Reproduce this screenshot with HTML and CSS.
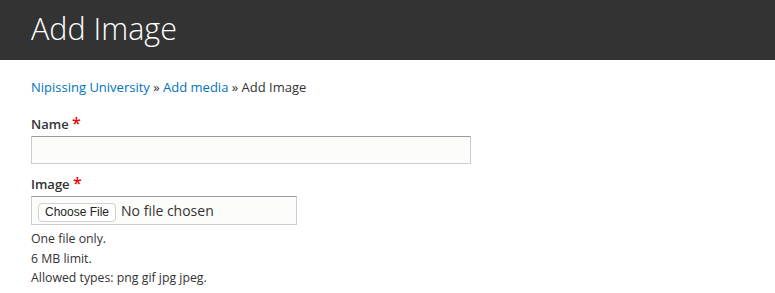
FILE: index.html
```html
<!DOCTYPE html>
<html lang="en">
<head>
  <meta charset="UTF-8">
  <title>Add Image</title>
  <link rel="stylesheet" href="styles.css">
</head>
<body>
  <!-- Page header -->
  <div class="page-header">
    <h1>Add Image</h1>
  </div>

  <div class="content">
    <div class="breadcrumb">
      <a href="#">Nipissing University</a> » <a href="#">Add media</a> » Add Image
    </div>

    <form class="media-form">
      <div class="form-item">
        <label for="edit-name">Name <span class="required">*</span></label>
        <input type="text" id="edit-name" class="form-text">
      </div>

      <div class="form-item">
        <label for="edit-image">Image <span class="required">*</span></label>
        <div class="file-wrap">
          <input type="file" id="edit-image" class="form-file">
        </div>
        <div class="description">
          One file only.<br>
          6 MB limit.<br>
          Allowed types: png gif jpg jpeg.
        </div>
      </div>
    </form>
  </div>
</body>
</html>
```

FILE: styles.css
```css
body {
  margin: 0;
  padding: 0;
  font-family: "Open Sans", "Liberation Sans", sans-serif;
  color: #333;
  background: #fff;
  font-size: 13px;
}
.page-header {
  background: #333;
  height: 60px;
  padding: 0 31px;
  box-sizing: border-box;
}
.page-header h1 {
  margin: 0;
  color: #fff;
  font-weight: 300;
  font-size: 30.5px;
  line-height: 57px;
}
.content {
  padding: 17px 31px 0;
}
.breadcrumb {
  line-height: 20px;
  font-size: 13px;
  color: #333;
}
.breadcrumb a {
  color: #0074bd;
  text-decoration: none;
}
.form-item {
  margin-top: 18px;
}
.form-item + .form-item {
  margin-top: 11px;
}
.form-item label {
  display: block;
  font-weight: 600;
  font-size: 13px;
  line-height: 18px;
  margin-bottom: 3px;
}
.required {
  color: #e00;
  font-size: 16px;
  line-height: 10px;
}
.form-text {
  display: block;
  width: 440px;
  height: 28px;
  box-sizing: border-box;
  border: 1px solid #ccc;
  border-top-color: #999;
  background: #fcfcfa;
  padding: 4px;
  margin: 0;
}
.file-wrap {
  width: 266px;
  height: 29px;
  box-sizing: border-box;
  border: 1px solid #ccc;
  border-top-color: #999;
  background: #fcfcfa;
  padding: 4px 6px;
}
.form-file {
  font-family: "Open Sans", "Liberation Sans", sans-serif;
  font-size: 14px;
  color: #333;
  margin: 0;
}
.form-file::file-selector-button {
  font-family: "Liberation Sans", sans-serif;
  font-size: 12px;
  color: #222;
  background: #fff;
  border: 1px solid #d0d0d0;
  border-radius: 4px;
  padding: 1px 6px;
  height: 19px;
  margin-right: 5px;
}
.description {
  margin-top: 4px;
  font-size: 12.3px;
  line-height: 19.5px;
  color: #333;
}
```
